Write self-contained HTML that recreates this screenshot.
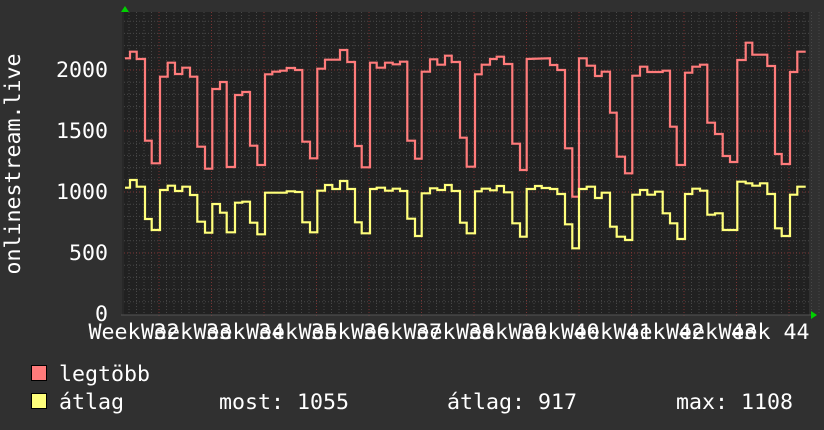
<!DOCTYPE html>
<html><head><meta charset="utf-8"><style>
html,body{margin:0;padding:0;background:#303030;}
svg{display:block}
text{font-family:"DejaVu Sans Mono","Liberation Mono",monospace;fill:#fff;font-size:21.6px}
</style></head><body>
<svg width="824" height="430" viewBox="0 0 824 430" xmlns="http://www.w3.org/2000/svg">
<rect width="824" height="430" fill="#303030"/>
<rect x="124" y="12" width="685" height="303" fill="#212121"/>
<rect x="122" y="12" width="2" height="303" fill="#282828"/>
<g stroke="#474747" stroke-width="1" stroke-dasharray="1,2">
<path d="M124 301.8H809M124 289.6H809M124 277.4H809M124 265.2H809M124 240.8H809M124 228.6H809M124 216.4H809M124 204.2H809M124 179.8H809M124 167.6H809M124 155.4H809M124 143.2H809M124 118.8H809M124 106.6H809M124 94.4H809M124 82.2H809M124 57.8H809M124 45.6H809M124 33.4H809M124 21.2H809"/>
</g>
<g stroke="#474747" stroke-width="1" stroke-dasharray="1,2" id="vmin">
<path d="M129 12V315M136.5 12V315M144 12V315M151.5 12V315M166.5 12V315M174 12V315M181.5 12V315M189 12V315M196.5 12V315M204 12V315"/>
</g>
<use href="#vmin" x="52.5"/><use href="#vmin" x="105"/><use href="#vmin" x="157.5"/><use href="#vmin" x="210"/><use href="#vmin" x="262.5"/><use href="#vmin" x="315"/><use href="#vmin" x="367.5"/><use href="#vmin" x="420"/><use href="#vmin" x="472.5"/><use href="#vmin" x="525"/><use href="#vmin" x="577.5"/><use href="#vmin" x="630"/>
<g stroke="#7a3434" stroke-width="1" stroke-dasharray="1,2">
<path d="M124 253H809M124 192H809M124 131H809M124 70H809"/>
<path d="M159 12V318M211.5 12V318M264 12V318M316.5 12V318M369 12V318M421.5 12V318M474 12V318M526.5 12V318M579 12V318M631.5 12V318M684 12V318M736.5 12V318M789 12V318"/>
</g>
<path d="M121 315H811" stroke="#555" stroke-width="1"/>
<polygon points="811,311 817,315 811,319" fill="#00d000"/>
<polygon points="121,12 125,6 129,12" fill="#00d000"/>
<polyline fill="none" stroke="#ff7b7b" stroke-width="2.2" points="125,58.3 130,58.3 130,51.7 136.7,51.7 136.7,59 145,59 145,140.7 151.7,140.7 151.7,163.3 160,163.3 160,76.7 167.7,76.7 167.7,62.7 175,62.7 175,74 182.3,74 182.3,67.7 190,67.7 190,76.7 197.3,76.7 197.3,146.7 205,146.7 205,168.7 212.3,168.7 212.3,89 220,89 220,82 226.7,82 226.7,167 235,167 235,95 242.3,95 242.3,92 250,92 250,145.7 257.3,145.7 257.3,165 265,165 265,74.3 272.3,74.3 272.3,71.7 280,71.7 280,70.7 286.7,70.7 286.7,68 295,68 295,70 302.3,70 302.3,141.7 310,141.7 310,158.3 317.3,158.3 317.3,68.7 325,68.7 325,59.7 340,59.7 340,50 347.3,50 347.3,62 355,62 355,146 361.7,146 361.7,167.3 370,167.3 370,62.7 376.7,62.7 376.7,67.7 385,67.7 385,62.7 392.7,62.7 392.7,64.3 400,64.3 400,61.7 407.3,61.7 407.3,140.7 415,140.7 415,158.7 421.7,158.7 421.7,71.7 430,71.7 430,59.3 437.3,59.3 437.3,64.7 445,64.7 445,55.7 451.7,55.7 451.7,62 460,62 460,137.7 466.7,137.7 466.7,166.7 475,166.7 475,74.3 481.7,74.3 481.7,64.7 490,64.7 490,59 496.7,59 496.7,56.7 504,56.7 504,64 512.3,64 512.3,143.7 520,143.7 520,170 526.7,170 526.7,59 550,58.3 550,65 557.3,65 557.3,70 565,70 565,148.3 572.3,148.3 572.3,196.7 579,196.7 579,58.3 586.7,58.3 586.7,65.7 595,65.7 595,76 601.7,76 601.7,71.7 610,71.7 610,112.7 616.7,112.7 616.7,156.7 625,156.7 625,173.3 632.3,173.3 632.3,75.7 640,75.7 640,66.7 647.3,66.7 647.3,72 662.7,72 662.7,70.7 670,70.7 670,126.7 676.7,126.7 676.7,165 685,165 685,72.7 692.3,72.7 692.3,66.7 700,66.7 700,64.7 707.3,64.7 707.3,122.7 715,122.7 715,134 722.7,134 722.7,156 730,156 730,162 737.3,162 737.3,60 745.7,60 745.7,42.7 752.3,42.7 752.3,54.7 767.3,54.7 767.3,66 775,66 775,154 781.7,154 781.7,164 790,164 790,72 797.3,72 797.3,51.7 805.7,51.7"/>
<polyline fill="none" stroke="#ffff7b" stroke-width="2.2" points="125,187.7 130,187.7 130,180 136.7,180 136.7,186.7 145,186.7 145,219 151.7,219 151.7,230 160,230 160,190 167.7,190 167.7,185.7 175,185.7 175,191 182.3,191 182.3,186.7 190,186.7 190,195 197.3,195 197.3,221.7 205,221.7 205,232.7 212.3,232.7 212.3,204 220,204 220,212.7 226.7,212.7 226.7,232.3 235,232.3 235,202.7 242.3,202.7 242.3,201.7 250,201.7 250,222.7 257.3,222.7 257.3,234.3 265,234.3 265,192.7 286.7,192.7 286.7,191.3 295,191.3 295,192 302.3,192 302.3,222.3 310,222.3 310,232.3 317.3,232.3 317.3,190.7 325,190.7 325,185 332.3,185 332.3,189 340,189 340,181 347.3,181 347.3,189 355,189 355,222.3 361.7,222.3 361.7,233.3 370,233.3 370,189 376.7,189 376.7,187.7 385,187.7 385,190.7 392.7,190.7 392.7,188.7 400,188.7 400,191 407.3,191 407.3,218.7 415,218.7 415,236 421.7,236 421.7,193.3 430,193.3 430,188.3 437.3,188.3 437.3,190 445,190 445,185 451.7,185 451.7,191 460,191 460,222.7 466.7,222.7 466.7,233.3 475,233.3 475,191.3 481.7,191.3 481.7,188.7 490,188.7 490,190.3 496.7,190.3 496.7,186 504,186 504,192.3 512.3,192.3 512.3,223.3 520,223.3 520,236.7 526.7,236.7 526.7,189 535,189 535,186 541.7,186 541.7,188 550,188 550,189 557.3,189 557.3,194 565,194 565,224.3 572.3,224.3 572.3,248.3 579,248.3 579,189 586.7,189 586.7,186.7 595,186.7 595,198 601.7,198 601.7,192.7 610,192.7 610,226.7 616.7,226.7 616.7,236.7 625,236.7 625,240 632.3,240 632.3,194.7 640,194.7 640,190 647.3,190 647.3,194.7 655,194.7 655,191.7 662.7,191.7 662.7,213.3 670,213.3 670,223.3 677.3,223.3 677.3,239 685,239 685,194 692.3,194 692.3,188.7 700,188.7 700,190.7 707.3,190.7 707.3,214.7 715,214.7 715,213.3 722.7,213.3 722.7,230 737.3,230 737.3,181.7 745.7,181.7 745.7,183.3 752.3,183.3 752.3,185.7 760,185.7 760,183.3 767.3,183.3 767.3,194 775,194 775,228.3 781.7,228.3 781.7,236 790,236 790,194.7 797.3,194.7 797.3,186.7 805.7,186.7"/>
<g text-anchor="end">
<text x="108" y="77">2000</text>
<text x="108" y="138">1500</text>
<text x="108" y="199">1000</text>
<text x="108" y="260">500</text>
<text x="108" y="321">0</text>
</g>
<text transform="translate(20,164) rotate(-90)" text-anchor="middle">onlinestream.live</text>
<g text-anchor="middle">
<text x="134" y="339">Week 32</text>
<text x="186.5" y="339">Week 33</text>
<text x="239" y="339">Week 34</text>
<text x="291.5" y="339">Week 35</text>
<text x="344" y="339">Week 36</text>
<text x="396.5" y="339">Week 37</text>
<text x="449" y="339">Week 38</text>
<text x="501.5" y="339">Week 39</text>
<text x="554" y="339">Week 40</text>
<text x="606.5" y="339">Week 41</text>
<text x="659" y="339">Week 42</text>
<text x="711.5" y="339">Week 43</text>
<text x="764" y="339">Week 44</text>
</g>
<rect x="31.5" y="365.5" width="15" height="15" fill="#ff7b7b" stroke="#000"/>
<rect x="31.5" y="393.5" width="15" height="15" fill="#ffff7b" stroke="#000"/>
<text x="59" y="381">legtöbb</text>
<text x="59" y="409">átlag</text>
<text x="219" y="409">most: 1055</text>
<text x="447" y="409">átlag: 917</text>
<text x="676" y="409">max: 1108</text>
</svg>
</body></html>
